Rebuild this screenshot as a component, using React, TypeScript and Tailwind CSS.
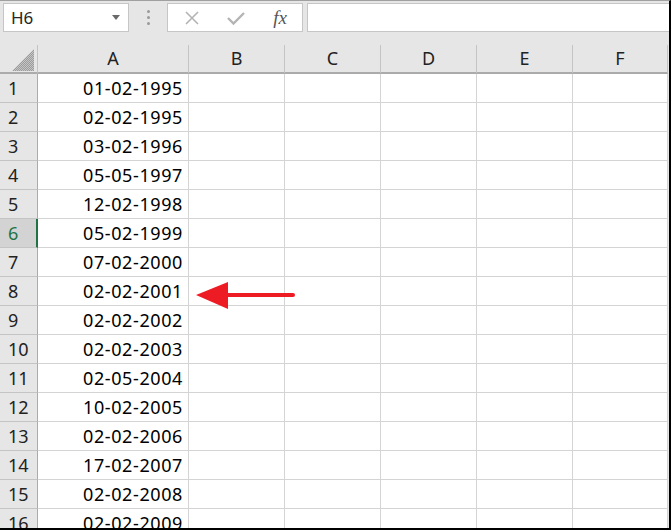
import React from "react";

const rows: string[] = [
  "01-02-1995",
  "02-02-1995",
  "03-02-1996",
  "05-05-1997",
  "12-02-1998",
  "05-02-1999",
  "07-02-2000",
  "02-02-2001",
  "02-02-2002",
  "02-02-2003",
  "02-05-2004",
  "10-02-2005",
  "02-02-2006",
  "17-02-2007",
  "02-02-2008",
  "02-02-2009",
];

const cols = ["A", "B", "C", "D", "E", "F"];
const font = { fontFamily: '"Noto Sans", "Open Sans", sans-serif' };

export default function App() {
  return (
    <div
      className="relative w-[671px] h-[530px] overflow-hidden bg-[#e6e6e6] border-t border-t-[#a0a0a0] border-r-2 border-r-black border-b-2 border-b-black box-border"
      style={font}
    >
      {/* formula bar */}
      <div className="flex items-start h-[44px] pt-[2px] pl-[3px]">
        <div className="flex items-center justify-between w-[126px] h-[29px] bg-white border border-[#c6c6c6] pl-[7px] pr-[8px]">
          <span className="text-[17px] text-[#262626] leading-none">H6</span>
          <svg width="8" height="5" viewBox="0 0 8 5">
            <polygon points="0,0 8,0 4,5" fill="#6a6a6a" />
          </svg>
        </div>
        <div className="w-[38px] h-[29px] flex flex-col items-center justify-center gap-[3px]">
          <div className="w-[3px] h-[3px] rounded-full bg-[#9a9a9a]" />
          <div className="w-[3px] h-[3px] rounded-full bg-[#9a9a9a]" />
          <div className="w-[3px] h-[3px] rounded-full bg-[#9a9a9a]" />
        </div>
        <div className="flex items-center w-[136px] h-[29px] bg-white border border-[#c6c6c6]">
          <div className="w-[46px] flex justify-center pl-[2px]">
            <svg width="16" height="16" viewBox="0 0 16 16">
              <path d="M2 2 L14 14 M14 2 L2 14" stroke="#b4b4b4" strokeWidth="1.6" fill="none" />
            </svg>
          </div>
          <div className="w-[44px] flex justify-center">
            <svg width="18" height="14" viewBox="0 0 18 14">
              <path d="M1 7 L6.5 12.5 L17 2" stroke="#b4b4b4" strokeWidth="2.4" fill="none" />
            </svg>
          </div>
          <div className="w-[44px] flex justify-center">
            <span
              className="italic text-[19px] leading-none text-[#555555]"
              style={{ fontFamily: '"Liberation Serif", "DejaVu Serif", serif' }}
            >
              fx
            </span>
          </div>
        </div>
        <div className="ml-[4px] flex-1 h-[29px] bg-white border border-[#c6c6c6] border-r-0" />
      </div>

      {/* grid */}
      <div className="grid grid-cols-[38px_151px_96px_96px_96px_96px_95px] auto-rows-[29px]">
        {/* header */}
        <div className="relative border-r border-r-[#c4c4c4] border-b-2 border-b-[#ababab]">
          <svg className="absolute left-[12px] top-[4px]" width="22" height="22" viewBox="0 0 22 22">
            <defs>
              <pattern id="hatch" width="2" height="2" patternUnits="userSpaceOnUse">
                <rect width="2" height="2" fill="#c4c4c4" />
                <rect width="1" height="1" fill="#9c9c9c" />
                <rect x="1" y="1" width="1" height="1" fill="#9c9c9c" />
              </pattern>
            </defs>
            <polygon points="22,0 22,22 0,22" fill="url(#hatch)" />
          </svg>
        </div>
        {cols.map((c) => (
          <div
            key={c}
            className="flex items-center justify-center border-r border-r-[#c4c4c4] border-b-2 border-b-[#ababab] text-[18px] text-[#222222] pb-[1px]"
          >
            {c}
          </div>
        ))}

        {rows.map((d, i) => {
          const sel = i === 5;
          return (
            <React.Fragment key={i}>
              <div
                className={
                  sel
                    ? "flex items-center pl-[8px] bg-[#d3d3d3] border-r-2 border-r-[#217346] border-b border-b-[#c4c4c4] text-[18px] text-[#217346]"
                    : "flex items-center pl-[8px] border-r border-r-[#ababab] border-b border-b-[#c4c4c4] text-[18px] text-[#222222]"
                }
              >
                {i + 1}
              </div>
              <div className="flex items-center justify-end pr-[5px] bg-white border-r border-r-[#d4d4d4] border-b border-b-[#d4d4d4] text-[18px] text-black tracking-[0.6px]">
                {d}
              </div>
              {[0, 1, 2, 3, 4].map((k) => (
                <div key={k} className="bg-white border-r border-r-[#d4d4d4] border-b border-b-[#d4d4d4]" />
              ))}
            </React.Fragment>
          );
        })}
      </div>

      {/* arrow */}
      <svg className="absolute left-[194px] top-[279px]" width="104" height="32" viewBox="0 0 104 32">
        <line x1="30" y1="15" x2="99" y2="15" stroke="#ed1c24" strokeWidth="4" strokeLinecap="round" />
        <polygon points="2,15 34,2 34,29" fill="#ed1c24" />
      </svg>
    </div>
  );
}
